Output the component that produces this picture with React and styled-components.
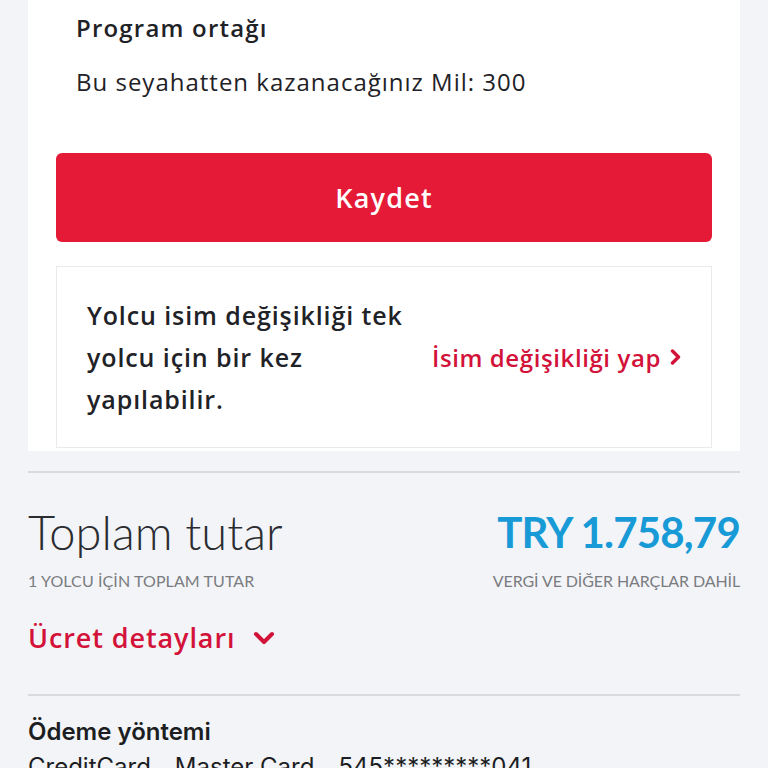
import React from "react";
import styled, { createGlobalStyle } from "styled-components";

const GlobalStyle = createGlobalStyle`
  html, body {
    margin: 0;
    padding: 0;
    background: #f3f4f8;
    font-family: "Open Sans", "Noto Sans", "Liberation Sans", sans-serif;
    color: #1f2227;
  }
`;

const Page = styled.div`
  padding: 0 28px;
  height: 768px;
  overflow: hidden;
`;

const Card = styled.section`
  background: #fff;
  padding: 8px 28px 3px;
`;

const Title = styled.h3`
  margin: 0 0 0 20px;
  font-size: 24px;
  font-weight: 600;
  line-height: 40px;
  letter-spacing: 1.2px;
`;

const Info = styled.p`
  margin: 14px 0 0 20px;
  font-size: 24px;
  font-weight: 400;
  line-height: 40px;
  letter-spacing: 1px;
`;

const SaveButton = styled.button`
  display: block;
  width: 100%;
  height: 89px;
  margin-top: 51px;
  border: none;
  border-radius: 6px;
  background: #e41a36;
  color: #fff;
  font-family: inherit;
  font-size: 27px;
  font-weight: 600;
  letter-spacing: 1.2px;
`;

const NoticeBox = styled.div`
  margin-top: 24px;
  border: 1.5px solid #e9eaec;
  padding: 27px 30px;
  display: flex;
  align-items: center;
  justify-content: space-between;
`;

const NoticeText = styled.p`
  margin: 0;
  width: 330px;
  font-size: 25px;
  font-weight: 600;
  line-height: 42px;
  letter-spacing: 0.9px;
`;

const ActionLink = styled.a`
  display: flex;
  align-items: center;
  gap: 9px;
  color: #d3123a;
  font-size: 24px;
  font-weight: 600;
  letter-spacing: 0.6px;
  text-decoration: none;
`;

const Divider = styled.hr`
  margin: ${(p) => p.$top}px 0 0;
  border: none;
  border-top: 2px solid #d9dadd;
`;

const TotalRow = styled.div`
  display: flex;
  justify-content: space-between;
  align-items: flex-start;
  margin-top: 33px;
`;

const Column = styled.div`
  display: flex;
  flex-direction: column;
  align-items: ${(p) => (p.$right ? "flex-end" : "flex-start")};
`;

const TotalLabel = styled.span`
  font-family: Lato, "Open Sans", sans-serif;
  font-size: 47px;
  font-weight: 300;
  line-height: 52px;
  color: #2a2c30;
`;

const Amount = styled.span`
  font-family: Lato, "Open Sans", sans-serif;
  font-size: 42px;
  font-weight: 700;
  line-height: 52px;
  color: #189ad6;
  letter-spacing: -0.8px;
`;

const SmallCaps = styled.span`
  margin-top: 13px;
  font-family: Lato, "Open Sans", sans-serif;
  font-size: 16px;
  font-weight: 400;
  line-height: 20px;
  color: #7a7c80;
  letter-spacing: ${(p) => (p.$tight ? "-0.1px" : "0.1px")};
`;

const DetailsToggle = styled.button`
  display: flex;
  align-items: center;
  gap: 18px;
  margin-top: 29px;
  padding: 0;
  border: none;
  background: none;
  color: #d3123a;
  font-family: inherit;
  font-size: 27px;
  font-weight: 600;
  line-height: 36px;
  letter-spacing: 0.9px;
`;

const SectionTitle = styled.h4`
  margin: 20px 0 0;
  font-family: Inter, Roboto, sans-serif;
  font-size: 24px;
  font-weight: 600;
  line-height: 32px;
  color: #1c1e22;
`;

const PaymentLine = styled.div`
  display: flex;
  gap: 24px;
  margin-top: 3px;
  font-family: Inter, Roboto, sans-serif;
  font-size: 24px;
  font-weight: 400;
  line-height: 32px;
  color: #1c1e22;
`;

const ChevronRight = () => (
  <svg width="11" height="16" viewBox="0 0 11 16">
    <path
      d="M2.5 2l6 6-6 6"
      fill="none"
      stroke="currentColor"
      strokeWidth="3.4"
      strokeLinecap="round"
      strokeLinejoin="round"
    />
  </svg>
);

const ChevronDown = () => (
  <svg width="22" height="14" viewBox="0 0 22 14">
    <path
      d="M3 3l8 8 8-8"
      fill="none"
      stroke="currentColor"
      strokeWidth="4"
      strokeLinecap="round"
      strokeLinejoin="round"
    />
  </svg>
);

export default function App() {
  return (
    <>
      <GlobalStyle />
      <Page>
        <Card>
          <Title>Program ortağı</Title>
          <Info>Bu seyahatten kazanacağınız Mil: 300</Info>
          <SaveButton>Kaydet</SaveButton>
          <NoticeBox>
            <NoticeText>
              Yolcu isim değişikliği tek yolcu için bir kez yapılabilir.
            </NoticeText>
            <ActionLink href="#">
              İsim değişikliği yap <ChevronRight />
            </ActionLink>
          </NoticeBox>
        </Card>
        <Divider $top={20} />
        <TotalRow>
          <Column>
            <TotalLabel>Toplam tutar</TotalLabel>
            <SmallCaps>1 YOLCU İÇİN TOPLAM TUTAR</SmallCaps>
          </Column>
          <Column $right>
            <Amount>TRY 1.758,79</Amount>
            <SmallCaps $tight>VERGİ VE DİĞER HARÇLAR DAHİL</SmallCaps>
          </Column>
        </TotalRow>
        <DetailsToggle>
          Ücret detayları <ChevronDown />
        </DetailsToggle>
        <Divider $top={38} />
        <SectionTitle>Ödeme yöntemi</SectionTitle>
        <PaymentLine>
          <span>CreditCard</span>
          <span>Master Card</span>
          <span>545*********041</span>
        </PaymentLine>
      </Page>
    </>
  );
}
